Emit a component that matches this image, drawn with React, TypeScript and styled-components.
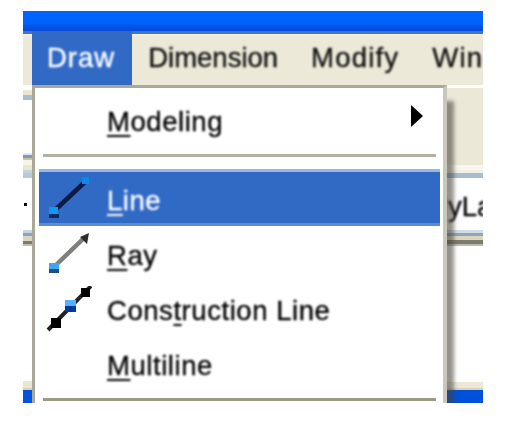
import styled, { createGlobalStyle } from 'styled-components';

const GlobalStyle = createGlobalStyle`
  html, body {
    margin: 0;
    background: #fff;
  }
`;

const Page = styled.div`
  width: 522px;
  height: 432px;
  box-sizing: border-box;
  padding: 11px 39px 29px 23px;
  overflow: hidden;
  font-family: 'Liberation Sans', Arial, sans-serif;
  font-size: 27.5px;
  color: #000;
`;

const Win = styled.div`
  width: 460px;
  height: 392px;
  overflow: hidden;
`;

const TitleBar = styled.div`
  height: 20px;
  background: linear-gradient(#0066ff 0, #0062fa 60%, #0056ea 75%, #0a48d8 100%);
`;

const MenuBar = styled.div`
  display: flex;
  height: 54px;
  box-sizing: border-box;
  padding-left: 9px;
  white-space: nowrap;
  overflow: hidden;
  background: linear-gradient(#3f74cc 0, #3f74cc 3px, #f6f1da 3px, #ece9d8 6px);
`;

const MenuTitle = styled.div<{ $active?: boolean; $spacing?: number }>`
  display: flex;
  align-items: center;
  flex: none;
  padding: 0 17px 0 ${p => (p.$active ? '15px' : '16px')};
  letter-spacing: ${p => p.$spacing ?? 0}px;
  color: ${p => (p.$active ? '#fff' : '#111')};
  background: ${p => (p.$active ? '#316ac5' : 'transparent')};
  span {
    display: inline-block;
    -webkit-text-stroke: 0.35px currentColor;
    filter: blur(0.8px);
  }
`;

const Workspace = styled.div`
  display: flex;
  height: 318px;
  overflow: hidden;
`;

const Dock = styled.div<{ $width: number }>`
  width: ${p => p.$width}px;
  flex: none;
`;

const Band = styled.div<{ $height: number; $color: string }>`
  height: ${p => p.$height}px;
  background: ${p => p.$color};
`;

const DockText = styled.div`
  height: 52px;
  display: flex;
  align-items: center;
  padding-top: 6px;
  box-sizing: border-box;
  white-space: nowrap;
  overflow: hidden;
  span {
    display: inline-block;
    margin-left: -22px;
    -webkit-text-stroke: 0.35px currentColor;
    filter: blur(0.8px);
  }
`;

const Dot = styled.div`
  height: 52px;
  padding-top: 25px;
  box-sizing: border-box;
  &::before {
    content: '';
    display: block;
    width: 3px;
    height: 3px;
    margin-left: 1px;
    background: #000;
  }
`;

const Menu = styled.div`
  position: relative;
  z-index: 1;
  flex: none;
  width: 415px;
  height: 340px;
  box-sizing: border-box;
  padding-top: 6px;
  background: #fff;
  border-top: 3px solid #aca899;
  border-left: 3px solid #aca899;
  border-right: 4px solid #c9c7bb;
  box-shadow: 8px 15px 4px -1px rgba(70, 68, 58, 0.58);
`;

const Item = styled.div<{ $active?: boolean; $gap?: number }>`
  position: relative;
  display: flex;
  align-items: center;
  height: ${p => (p.$active ? '57px' : '55px')};
  box-sizing: border-box;
  margin: ${p => p.$gap ?? 0}px 3px 0 4px;
  padding: ${p => (p.$active ? '6px' : '0')} 0 0 7px;
  color: ${p => (p.$active ? '#fff' : '#000')};
  background: ${p => (p.$active ? '#316ac5' : 'transparent')};
  border-top: ${p => (p.$active ? '3px solid #9db5e2' : 'none')};
  border-bottom: ${p => (p.$active ? '3px solid #5f8ad6' : 'none')};
`;

const IconSlot = styled.div<{ $lift?: number }>`
  width: 61px;
  height: 50px;
  flex: none;
  margin-top: ${p => p.$lift ?? 0}px;
  svg {
    display: block;
    filter: blur(0.7px);
  }
`;

const Label = styled.span`
  display: inline-block;
  letter-spacing: 0.55px;
  white-space: nowrap;
  -webkit-text-stroke: 0.35px currentColor;
  filter: blur(0.8px);
`;

const Mnemonic = styled.span`
  text-decoration: underline;
  text-decoration-thickness: 2px;
  text-underline-offset: 4px;
`;

const Arrow = styled.div`
  position: absolute;
  right: 17px;
  top: 11px;
  width: 0;
  height: 0;
  border-top: 11px solid transparent;
  border-bottom: 11px solid transparent;
  border-left: 12px solid #000;
  filter: blur(0.5px);
`;

const Separator = styled.div<{ $top: number; $bottom: number; $color: string }>`
  height: 3px;
  margin: ${p => p.$top}px 7px ${p => p.$bottom}px 8px;
  background: ${p => p.$color};
`;

const LineIcon = () => (
  <svg width="46" height="50" viewBox="0 0 46 50">
    <line x1="8" y1="38" x2="40" y2="8" stroke="#0b1b44" strokeWidth="4.5" />
    <rect x="36" y="4" width="7" height="7" fill="#0a8be8" />
    <rect x="3" y="34" width="9" height="7" fill="#0a9af0" />
    <rect x="3" y="41" width="10" height="4" fill="#0b2a60" />
  </svg>
);

const RayIcon = () => (
  <svg width="46" height="50" viewBox="0 0 46 50">
    <line x1="10" y1="34" x2="38" y2="7" stroke="#807f7c" strokeWidth="4.5" />
    <polygon points="34,6 43,2 41,13" fill="#2f2d2a" />
    <rect x="3" y="32" width="10" height="6" fill="#3aa8f8" />
    <rect x="3" y="38" width="10" height="4" fill="#20507f" />
  </svg>
);

const ConstructionIcon = () => (
  <svg width="46" height="50" viewBox="0 0 46 50">
    <line x1="2" y1="44" x2="45" y2="0" stroke="#222" strokeWidth="4" />
    <rect x="5" y="32" width="10" height="10" fill="#000" />
    <rect x="19" y="14" width="11" height="6" fill="#55b0ff" />
    <rect x="19" y="20" width="11" height="6" fill="#00389a" />
    <rect x="35" y="2" width="9" height="9" fill="#000" />
  </svg>
);

const leftTop: [number, string][] = [
  [5, '#ffffff'], [5, '#ece6d0'], [5, '#aabdd0'], [53, '#ffffff'], [2, '#dfe6ee'], [3, '#7f9ab5'],
  [2, '#c8c0a8'], [5, '#f7f4e8'], [5, '#ece6d0'], [3, '#c6d2da'], [5, '#b5c8dc'],
];
const leftBottom: [number, string][] = [
  [3, '#c5d4e4'], [3, '#90a4b8'], [5, '#ddd5bd'], [3, '#7f7b6c'], [2, '#c0bcb0'], [135, '#ffffff'],
  [7, '#ece5d2'], [2, '#ddd0b8'], [13, '#0052e0'],
];
const rightTop: [number, string][] = [
  [3, '#ffffff'], [77, '#ece8d8'], [5, '#f8f6ee'], [3, '#f0f0ea'], [5, '#a8bccc'],
];
const rightBottom: [number, string][] = [
  [3, '#d0dce8'], [3, '#8fa5b8'], [4, '#ddd5bd'], [4, '#7f7b6c'], [2, '#bbbbb4'], [136, '#ffffff'],
  [6, '#ece8d8'], [2, '#ddd0b8'], [13, '#0050dc'],
];

const bands = (list: [number, string][]) =>
  list.map(([height, color], i) => <Band key={i} $height={height} $color={color} />);

const App = () => {
  return (
    <Page>
      <GlobalStyle />
      <Win>
        <TitleBar />
        <MenuBar>
          <MenuTitle $active $spacing={1}><span>Draw</span></MenuTitle>
          <MenuTitle><span>Dimension</span></MenuTitle>
          <MenuTitle $spacing={1.2}><span>Modify</span></MenuTitle>
          <MenuTitle $spacing={1.2}><span>Window</span></MenuTitle>
        </MenuBar>
        <Workspace>
          <Dock $width={9}>
            {bands(leftTop)}
            <Dot />
            {bands(leftBottom)}
          </Dock>
          <Menu>
            <Item>
              <IconSlot />
              <Label><Mnemonic>M</Mnemonic>odeling</Label>
              <Arrow />
            </Item>
            <Separator $top={5} $bottom={12} $color="#b5b1a2" />
            <Item $active>
              <IconSlot $lift={-6}><LineIcon /></IconSlot>
              <Label><Mnemonic>L</Mnemonic>ine</Label>
            </Item>
            <Item $gap={2}>
              <IconSlot><RayIcon /></IconSlot>
              <Label><Mnemonic>R</Mnemonic>ay</Label>
            </Item>
            <Item>
              <IconSlot><ConstructionIcon /></IconSlot>
              <Label>Cons<Mnemonic>t</Mnemonic>ruction Line</Label>
            </Item>
            <Item>
              <IconSlot />
              <Label><Mnemonic>M</Mnemonic>ultiline</Label>
            </Item>
            <Separator $top={5} $bottom={0} $color="#9d9a86" />
          </Menu>
          <Dock $width={36}>
            {bands(rightTop)}
            <DockText><span>MyLayer</span></DockText>
            {bands(rightBottom)}
          </Dock>
        </Workspace>
      </Win>
    </Page>
  );
};

export default App;
